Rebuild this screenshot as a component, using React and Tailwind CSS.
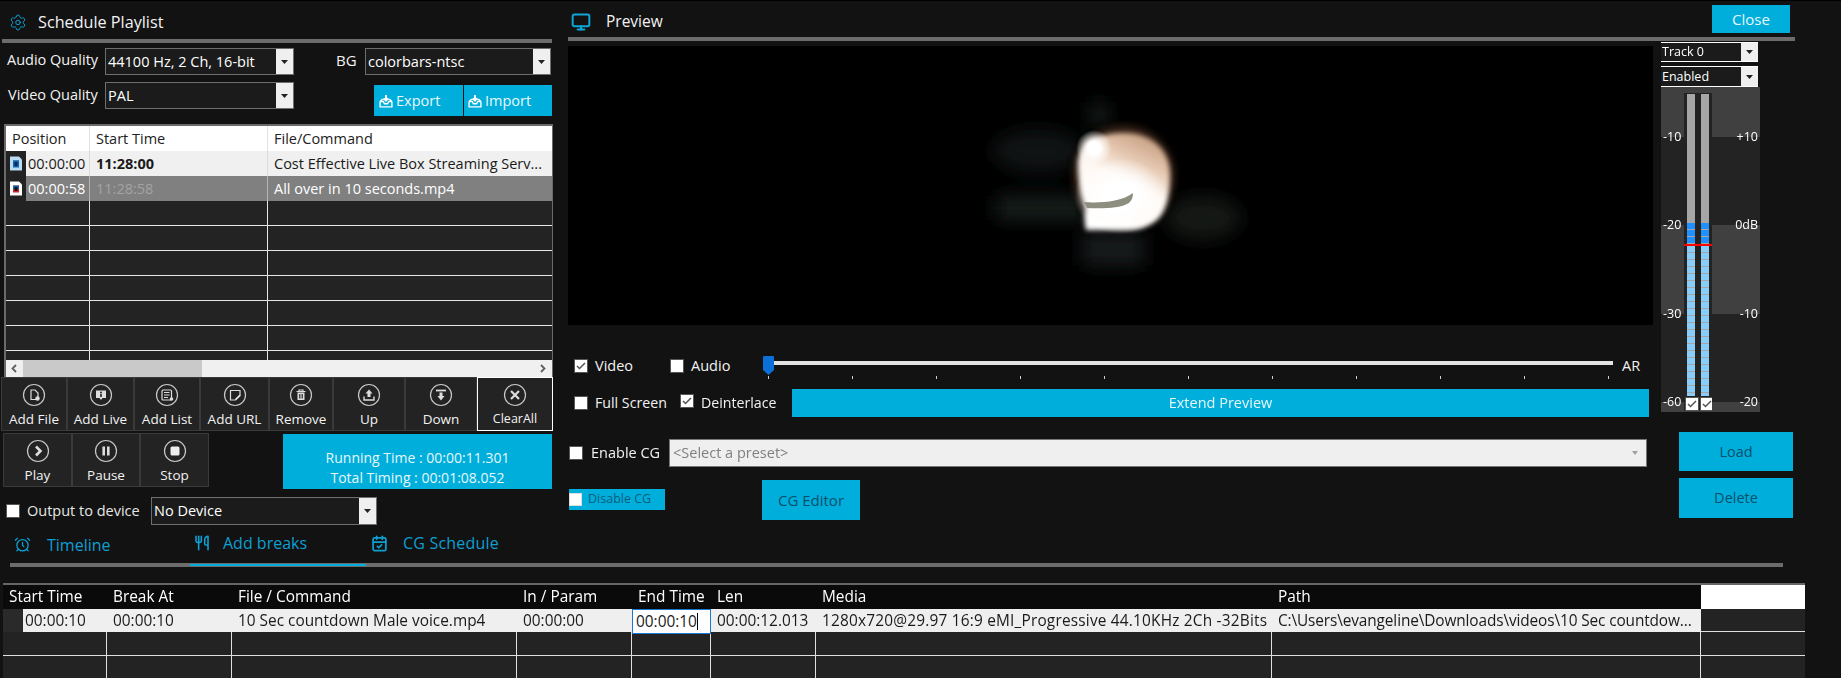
import React from "react";
import { Monitor, AlarmClock, Utensils, CalendarCheck, Settings } from "lucide-react";

const cyan = "bg-[#00aedb]";

function Arrow() {
  return (
    <span className="w-[17px] self-stretch bg-[#efefef] flex items-center justify-center shrink-0">
      <svg width="7" height="4" viewBox="0 0 7 4"><path d="M0 0h7L3.5 4z" fill="#222" /></svg>
    </span>
  );
}

function Select({ value, className }) {
  return (
    <div className={"flex items-center border border-[#6e6e6e] bg-[#1b1b1b] text-[14.5px] leading-[20px] text-white " + className}>
      <span className="flex-1 pl-[2px] whitespace-nowrap">{value}</span>
      <Arrow />
    </div>
  );
}

function Check({ checked, className = "" }) {
  return (
    <span className={"inline-flex items-center justify-center w-[12px] h-[12px] bg-white outline outline-1 outline-[#555] shrink-0 " + className}>
      {checked && (
        <svg width="10" height="10" viewBox="0 0 10 10"><path d="M1 5l2.5 2.5L9 2" stroke="#555" strokeWidth="1.5" fill="none" /></svg>
      )}
    </span>
  );
}

function InboxIcon() {
  return (
    <svg width="14" height="14" viewBox="0 0 13 13" fill="none" stroke="#fff" strokeWidth="1.3" className="shrink-0">
      <path d="M1 7l2-2h1.5M12 7l-2-2H8.5M1 7v5h11V7M1 7h3l1 2h3l1-2h3" />
      <path d="M6.5 1v5M4.5 4l2 2.2 2-2.2" strokeWidth="1.8" />
    </svg>
  );
}

function FileGlyph({ dark }) {
  return (
    <svg width="12" height="15" viewBox="0 0 12 14">
      <path d="M0 0h9l3 3v11H0z" fill={dark ? "#fff" : "#b9dcf2"} />
      <rect x="3" y="4" width="6" height="7" fill={dark ? "#d8232a" : "#1167b1"} />
      <rect x="3" y="4" width="6" height="3.5" fill="#1167b1" />
      <rect x="4.5" y="5.5" width="3" height="4" fill={dark ? "#111" : "#0b2b55"} />
    </svg>
  );
}

const glyphs = {
  file: <><path d="M9 7h4l3 3v6.5H9z" fill="none" /><circle cx="15.5" cy="15.5" r="2.2" fill="#ddd" stroke="none" /></>,
  live: <><path d="M7 7.5h10v7.5h-3.5l-1.5 2-1.5-2H7z" fill="#ddd" stroke="none" /><circle cx="12" cy="9.5" r="1" fill="#222" stroke="none" /><rect x="11.2" y="11" width="1.6" height="3" fill="#222" stroke="none" /></>,
  list: <><rect x="7" y="7" width="9.5" height="10" rx="1" fill="none" /><path d="M9 9.5h5.5M9 12h5.5M9 14.5h4" /><circle cx="16.5" cy="16" r="1.8" fill="#ddd" stroke="none" /></>,
  url: <><path d="M7.5 7.5h9.5v5l-4.5 4.5h-5z" fill="none" /><path d="M12.5 15.5l4-4 1.2 1.2-4 4h-1.2z" fill="#ddd" stroke="none" /></>,
  remove: <><path d="M7.5 8.5h9M10 8.5V7h4v1.5" fill="none" /><path d="M8.5 9.5h7V17h-7z" fill="#ddd" stroke="none" /><path d="M10.5 11v4.5M12 11v4.5M13.5 11v4.5" stroke="#222" strokeWidth="0.8" /></>,
  up: <><path d="M12 6.5l3.5 4h-2v3.5h-3v-3.5h-2z" fill="#ddd" stroke="none" /><path d="M7 13.5v3.5h10v-3.5" fill="none" strokeWidth="1.4" /></>,
  down: <><path d="M7 7.5h10" strokeWidth="1.8" /><path d="M10.5 9.5h3v3.5h2L12 17.5 8.5 13h2z" fill="#ddd" stroke="none" /></>,
  clear: <path d="M8 8l8 8M16 8l-8 8" strokeWidth="2.2" />,
  play: <path d="M10 7.5l4.5 4.5-4.5 4.5" fill="none" strokeWidth="2.6" />,
  pause: <path d="M9.7 7.5v9M14.3 7.5v9" strokeWidth="2.6" />,
  stop: <rect x="7.5" y="7.5" width="9" height="9" rx="1.5" fill="#eee" stroke="none" />,
};

function ToolBtn({ label, icon, className, text = "text-[13.5px]" }) {
  return (
    <div className={"flex flex-col items-center bg-[#232323] border border-[#3a3a3a] pt-[5px] " + className}>
      <svg width="24" height="24" viewBox="0 0 24 24" stroke="#ddd" strokeWidth="1.2">
        <circle cx="12" cy="12" r="10.5" fill="none" stroke="#c8c8c8" />
        {glyphs[icon]}
      </svg>
      <span className={"mt-[3px] leading-[18px] whitespace-nowrap text-[#f2f2f2] " + text}>{label}</span>
    </div>
  );
}

const leftCols = ["w-[84px]", "w-[178px]", "w-[283px]"];

function LeftTable() {
  return (
    <div className="ml-[4px] mt-[8px] w-[549px] border-l-2 border-r border-t-2 border-[#6a6a6a] flex flex-col">
      <div className="flex h-[25px] bg-white text-[#222] text-[14.5px] items-center shrink-0">
        <div className={leftCols[0] + " pl-[6px] pt-[1px] h-full flex items-center border-r border-[#e2e2e2]"}>Position</div>
        <div className={leftCols[1] + " pl-[6px] pt-[1px] h-full flex items-center border-r border-[#e2e2e2]"}>Start Time</div>
        <div className={leftCols[2] + " pl-[6px] pt-[1px] h-full flex items-center"}>File/Command</div>
      </div>
      <div className="h-[209px] overflow-hidden bg-[#232323]">
        <div className="flex h-[25px] bg-[#f0f0f0] text-[#1a1a1a] text-[14.5px] items-center">
          <div className={leftCols[0] + " h-full flex items-center border-r border-[#dadada]"}>
            <span className="w-[20px] h-full bg-[#232323] flex items-center justify-center"><FileGlyph /></span>
            <span className="pl-[2px]">00:00:00</span>
          </div>
          <div className={leftCols[1] + " pl-[6px] font-bold h-full flex items-center border-r border-[#dadada]"}>11:28:00</div>
          <div className={leftCols[2] + " pl-[6px] whitespace-nowrap h-full flex items-center"}>Cost Effective Live Box Streaming Serv...</div>
        </div>
        <div className="flex h-[25px] bg-[#808080] text-white text-[14.5px] items-center">
          <div className={leftCols[0] + " h-full flex items-center border-r border-[#b5b5b5]"}>
            <span className="w-[20px] h-full bg-[#232323] flex items-center justify-center"><FileGlyph dark /></span>
            <span className="pl-[2px]">00:00:58</span>
          </div>
          <div className={leftCols[1] + " pl-[6px] text-[#a3a3a3] h-full flex items-center border-r border-[#b5b5b5]"}>11:28:58</div>
          <div className={leftCols[2] + " pl-[6px] h-full flex items-center"}>All over in 10 seconds.mp4</div>
        </div>
        {[0, 1, 2, 3, 4, 5, 6].map((i) => (
          <div key={i} className="flex h-[25px] border-b border-[#e6e6e6]">
            <div className={leftCols[0] + " border-r border-[#e6e6e6]"} />
            <div className={leftCols[1] + " border-r border-[#e6e6e6]"} />
            <div className={leftCols[2]} />
          </div>
        ))}
      </div>
      <div className="h-[17px] bg-[#f0f0f0] flex items-center justify-between pr-[3px]">
        <div className="flex items-center h-full">
          <svg width="17" height="17" viewBox="0 0 17 17"><path d="M10 5l-3.5 3.5L10 12" stroke="#606060" strokeWidth="1.8" fill="none" /></svg>
          <div className="w-[179px] h-full bg-[#c9c9c9]" />
        </div>
        <svg width="12" height="17" viewBox="0 0 12 17"><path d="M4 5l3.5 3.5L4 12" stroke="#606060" strokeWidth="1.8" fill="none" /></svg>
      </div>
    </div>
  );
}

function LeftColumn() {
  return (
    <div className="w-[556px] shrink-0 flex flex-col">
      <div className="h-[38px] flex items-center pl-[9px] pt-[4px]">
        <span className="w-[18px] h-[18px] flex items-center justify-center">
          <Settings size={21} color="#0ea5d8" strokeWidth={1.3} />
        </span>
        <span className="ml-[11px] text-[16.2px] text-[#f2f2f2] whitespace-nowrap">Schedule Playlist</span>
      </div>
      <div className="ml-[2px] mr-[4px] h-[4px] bg-[#6c6c6c]" />
      <div className="flex mt-[5px]">
        <div className="flex flex-col gap-[7px] w-[365px] shrink-0">
          <div className="flex items-center h-[27px]">
            <span className="w-[105px] pl-[7px] pb-[4px] text-[14.5px] text-[#f2f2f2] whitespace-nowrap">Audio Quality</span>
            <Select value="44100 Hz, 2 Ch, 16-bit" className="w-[189px] h-[27px]" />
            <span className="ml-[42px] pb-[2px] text-[15px] text-[#f2f2f2]">BG</span>
          </div>
          <div className="flex items-center h-[27px]">
            <span className="w-[105px] pl-[8px] pb-[1px] text-[14.5px] text-[#f2f2f2] whitespace-nowrap">Video Quality</span>
            <Select value="PAL" className="w-[189px] h-[27px]" />
          </div>
        </div>
        <div className="flex flex-col">
          <Select value="colorbars-ntsc" className="w-[186px] h-[27px]" />
          <div className="flex ml-[9px] mt-[10px] gap-[1px]">
            <div className={cyan + " w-[89px] h-[31px] flex items-center pl-[5px] gap-[3px] text-[14.5px] text-[#eaf7fb]"}><InboxIcon />Export</div>
            <div className={cyan + " w-[88px] h-[31px] flex items-center pl-[4px] gap-[3px] text-[14.5px] text-[#eaf7fb]"}><InboxIcon />Import</div>
          </div>
        </div>
      </div>
      <LeftTable />
      <div className="flex ml-[1px] h-[54px]">
        <ToolBtn label="Add File" icon="file" className="w-[66px]" />
        <ToolBtn label="Add Live" icon="live" className="w-[67px]" />
        <ToolBtn label="Add List" icon="list" className="w-[66px]" />
        <ToolBtn label="Add URL" icon="url" className="w-[69px]" />
        <ToolBtn label="Remove" icon="remove" className="w-[64px]" />
        <ToolBtn label="Up" icon="up" className="w-[72px]" />
        <ToolBtn label="Down" icon="down" className="w-[72px]" />
        <ToolBtn label="ClearAll" icon="clear" className="w-[76px] !border-white" text="text-[12.5px]" />
      </div>
      <div className="flex mt-[2px] ml-[3px] items-start">
        <ToolBtn label="Play" icon="play" className="w-[69px] h-[54px]" />
        <ToolBtn label="Pause" icon="pause" className="w-[68px] h-[54px]" />
        <ToolBtn label="Stop" icon="stop" className="w-[69px] h-[54px]" />
        <div className={cyan + " ml-[74px] mt-[1px] w-[269px] h-[55px] flex flex-col items-center justify-end pb-[1px] text-[14px] leading-[20px] text-[#e6f6fb]"}>
          <span>Running Time : 00:00:11.301</span>
          <span>Total Timing : 00:01:08.052</span>
        </div>
      </div>
      <div className="flex items-center mt-[8px] h-[28px] pl-[7px]">
        <Check />
        <span className="ml-[8px] w-[124px] text-[14.5px] text-[#e6e6e6] whitespace-nowrap">Output to device</span>
        <Select value="No Device" className="w-[226px] h-[28px]" />
      </div>
      <div className="flex mt-[3px] h-[34px] text-[#0e9fd2] text-[16px]">
        <div className="flex items-center w-[190px] pl-[14px] pb-[1px]">
          <AlarmClock size={17} strokeWidth={1.8} />
          <span className="ml-[16px]">Timeline</span>
        </div>
        <div className="flex items-center w-[176px] pl-[4px] pb-[4px]">
          <Utensils size={16} strokeWidth={2.4} />
          <span className="ml-[13px]">Add breaks</span>
        </div>
        <div className="flex items-center pl-[5px] pb-[4px]">
          <CalendarCheck size={17} strokeWidth={2.4} />
          <span className="ml-[15px] tracking-[0.2px]">CG Schedule</span>
        </div>
      </div>
    </div>
  );
}

function NineGlow() {
  return (
    <svg width="1085" height="279" viewBox="0 0 1085 279" className="block">
      <defs>
        <filter id="b2" x="-30%" y="-30%" width="160%" height="160%"><feGaussianBlur stdDeviation="2.6" /></filter>
        <filter id="b1" x="-30%" y="-30%" width="160%" height="160%"><feGaussianBlur stdDeviation="0.6" /></filter>
        <filter id="b8" x="-40%" y="-60%" width="180%" height="220%"><feGaussianBlur stdDeviation="9" /></filter>
        <linearGradient id="nine" x1="0.75" y1="0" x2="0.3" y2="1">
          <stop offset="0" stopColor="#c39a7c" />
          <stop offset="0.28" stopColor="#e6c9b2" />
          <stop offset="0.5" stopColor="#fff8f2" />
          <stop offset="1" stopColor="#ffffff" />
        </linearGradient>
        <radialGradient id="hot" cx="0.5" cy="0.5" r="0.5">
          <stop offset="0.35" stopColor="#fff" />
          <stop offset="1" stopColor="#fff" stopOpacity="0" />
        </radialGradient>
        <radialGradient id="halo" cx="0.5" cy="0.5" r="0.5">
          <stop offset="0.82" stopColor="#6a4430" stopOpacity="0.55" />
          <stop offset="1" stopColor="#3a2518" stopOpacity="0" />
        </radialGradient>
      </defs>
      <g filter="url(#b8)" fill="#2a302d">
        <ellipse cx="470" cy="105" rx="46" ry="22" opacity="0.38" />
        <rect x="428" y="150" width="90" height="24" opacity="0.6" />
        <ellipse cx="635" cy="172" rx="38" ry="22" opacity="0.45" />
        <rect x="514" y="186" width="62" height="34" opacity="0.55" />
        <rect x="523" y="56" width="16" height="26" opacity="0.6" />
      </g>
      <ellipse cx="556" cy="130" rx="56" ry="56" fill="url(#halo)" filter="url(#b2)" />
      <g filter="url(#b2)">
        <path d="M510 118C510 98 530 87 556 87C585 87 602 105 602 128C602 150 598 165 590 173C582 181 570 184 560 184H518C516 176 516 170 518 162C513 150 510 135 510 118Z" fill="url(#nine)" />
      </g>
      <ellipse cx="526" cy="102" rx="18" ry="18" fill="url(#hot)" />
      <ellipse cx="552" cy="150" rx="46" ry="38" fill="url(#hot)" />
      <path d="M516 156C528 157 552 157 565 147C565 152 563 156 559 158C552 162 535 163 519 162Z" fill="#8d8d80" filter="url(#b1)" />
    </svg>
  );
}

function Meter() {
  const Band = ({ labels, align }) => {
    const bands = [
      ["h-[50px] bg-[#404040]", labels[0]],
      ["h-[88px] bg-[#232323]", labels[1]],
      ["h-[89px] bg-[#404040]", labels[2]],
      ["h-[88px] bg-[#232323]", labels[3]],
      ["h-[10px] bg-[#404040]", null],
    ];
    return (
      <div className="flex flex-col flex-1">
        {bands.map(([c, l], i) => (
          <div key={i} className={"relative " + c}>
            {l && <span className={"absolute z-10 bottom-[-9px] text-[12.5px] leading-[18px] text-white " + align}>{l}</span>}
          </div>
        ))}
      </div>
    );
  };
  const ticks = (n, c) =>
    Array.from({ length: n }).map((_, i) => <div key={i} className={"h-[7px] shrink-0 border-b border-[#a6a6a6] " + c} />);
  const Bar = () => (
    <div className="w-[8px] flex flex-col">
      <div className="h-[129px] bg-[#a6a6a6]" />
      {ticks(3, "bg-[#1e90ff]")}
      <div className="h-[2px]" />
      <div className="h-[150px] overflow-hidden">{ticks(22, "bg-[#87cefa]")}</div>
    </div>
  );
  return (
    <div className="w-[99px] ml-[8px] mt-[1px] flex flex-col">
      <div className="flex items-center h-[20px] w-[97px] border-y border-white bg-[#1b1b1b] text-[12.5px] text-white leading-[16px]">
        <span className="flex-1 pl-[1px]">Track 0</span>
        <Arrow />
      </div>
      <div className="flex items-center h-[21px] w-[97px] mt-[4px] border-y border-white bg-[#1b1b1b] text-[12.5px] text-white leading-[16px]">
        <span className="flex-1 pl-[1px]">Enabled</span>
        <Arrow />
      </div>
      <div className="flex h-[325px]">
        <div className="w-[23px]"><Band align="left-[2px]" labels={["-10", "-20", "-30", "-60"]} /></div>
        <div className="w-[28px] flex flex-col">
          <div className="h-[6px] bg-[#404040]" />
          <div className="relative h-[318px] bg-[#232323] flex flex-col pt-[1px]">
            <div className="flex gap-[6px] pl-[3px]"><Bar /><Bar /></div>
            <div className="flex gap-[3px] pl-[2px] mt-[2px]"><Check checked /><Check checked /></div>
            <div className="absolute left-0 right-0 top-[151px] h-[2px] bg-[#ff0000]" />
          </div>
          <div className="h-[1px] bg-[#404040]" />
        </div>
        <div className="w-[48px]"><Band align="right-[2px]" labels={["+10", "0dB", "-10", "-20"]} /></div>
      </div>
    </div>
  );
}

function Slider() {
  return (
    <div className="flex-1 h-[30px] ml-[33px]">
      <div className="flex items-center">
        <svg width="11" height="20" viewBox="0 0 11 20" className="shrink-0"><path d="M1 0h9a1 1 0 011 1v13l-5.5 5L0 14V1a1 1 0 011-1z" fill="#0a6fd6" /></svg>
        <div className="flex-1 h-[4px] mb-[7px] bg-[#e2e2e2]" />
      </div>
      <div className="flex gap-[83px] pl-[5px]">
        {Array.from({ length: 11 }).map((_, i) => (
          <span key={i} className="w-[1px] h-[3px] bg-[#cfcfcf] shrink-0" />
        ))}
      </div>
    </div>
  );
}

function RightColumn() {
  return (
    <div className="flex-1 flex flex-col min-w-0">
      <div className="h-[36px] flex items-center w-[1239px] pl-[15px]">
        <span className="pt-[5px]"><Monitor size={20} color="#0ea5d8" strokeWidth={2.4} /></span>
        <span className="ml-[15px] pt-[6px] text-[15.5px] text-[#f2f2f2]">Preview</span>
        <div className={cyan + " ml-auto mr-[5px] w-[78px] h-[28px] flex items-center justify-center text-[15px] text-[#e6f6fb]"}>Close</div>
      </div>
      <div className="h-[4px] ml-[12px] w-[1227px] bg-[#6c6c6c]" />
      <div className="flex">
        <div className="w-[1097px] pl-[12px] flex flex-col shrink-0">
          <div className="mt-[5px] h-[279px] bg-black overflow-hidden"><NineGlow /></div>
          <div className="flex mt-[31px] h-[30px] items-start pl-[7px] text-[14.5px] text-[#f2f2f2]">
            <div className="flex items-center h-[20px]"><Check checked /><span className="ml-[8px] leading-[20px]">Video</span></div>
            <div className="flex items-center h-[20px] ml-[38px]"><Check /><span className="ml-[8px] leading-[20px]">Audio</span></div>
            <Slider />
            <span className="ml-[9px] mr-[12px] w-[19px] leading-[20px]">AR</span>
          </div>
          <div className="flex items-center mt-[3px] h-[28px] pl-[7px] pr-[4px] text-[14.2px] text-[#f2f2f2]">
            <Check /><span className="ml-[8px] whitespace-nowrap">Full Screen</span>
            <Check checked className="ml-[14px] -mt-[4px]" /><span className="ml-[8px] whitespace-nowrap">Deinterlace</span>
            <div className={cyan + " ml-auto w-[857px] h-[28px] flex items-center justify-center text-[#e6f6fb] text-[14.5px]"}>Extend Preview</div>
          </div>
        </div>
        <Meter />
      </div>
      <div className="flex mt-[15px]">
        <div className="w-[1123px] shrink-0 pl-[13px] flex flex-col">
          <div className="flex items-center h-[28px] mt-[7px]">
            <Check className="ml-[1px]" />
            <span className="ml-[9px] w-[78px] text-[14.5px] text-[#f2f2f2] whitespace-nowrap">Enable CG</span>
            <div className="w-[978px] h-[28px] bg-[#efefef] border border-[#777] flex items-center justify-between pl-[3px] pr-[8px] text-[14.5px] text-[#808080]">
              <span>&lt;Select a preset&gt;</span>
              <svg width="6" height="4" viewBox="0 0 6 4"><path d="M0 0h6L3 4z" fill="#a0a0a0" /></svg>
            </div>
          </div>
          <div className="flex items-start mt-[13px]">
            <div className={cyan + " w-[96px] h-[21px] mt-[9px] flex items-center text-[12.5px] text-[#0b5d7c]"}>
              <span className="w-[13px] h-[13px] bg-white border border-[#ddd] shrink-0" />
              <span className="ml-[6px] whitespace-nowrap">Disable CG</span>
            </div>
            <div className={cyan + " ml-[97px] w-[98px] h-[40px] flex items-center justify-center text-[15px] text-[#084f6c]"}>CG Editor</div>
          </div>
        </div>
        <div className="flex flex-col gap-[7px]">
          <div className={cyan + " w-[114px] h-[39px] flex items-center justify-center text-[14.5px] text-[#084f6c]"}>Load</div>
          <div className={cyan + " w-[114px] h-[40px] flex items-center justify-center text-[14.5px] text-[#084f6c]"}>Delete</div>
        </div>
      </div>
    </div>
  );
}

const bc = ["w-[104px]", "w-[125px]", "w-[285px]", "w-[115px]", "w-[79px]", "w-[105px]", "w-[456px]", "w-[429px]", "w-[104px]"];
const heads = ["Start Time", "Break At", "File / Command", "In / Param", "End Time", "Len", "Media", "Path"];

function BottomTable() {
  const cells = ["00:00:10", "00:00:10", "10 Sec countdown Male voice.mp4", "00:00:00", "00:00:10", "00:00:12.013", "1280x720@29.97 16:9 eMI_Progressive 44.10KHz 2Ch -32Bits", "C:\\Users\\evangeline\\Downloads\\videos\\10 Sec countdow..."];
  const extra = { 5: " tracking-[0.2px]", 6: " tracking-[-0.12px]" };
  return (
    <div className="ml-[3px] mt-[16px] flex-1 flex flex-col overflow-hidden border-t-2 border-[#666] w-[1802px] text-[15.4px]">
      <div className="flex h-[24px] shrink-0">
        {heads.map((h, i) => (
          <div key={h} className={bc[i] + " bg-[#0a0a0a] text-white pl-[6px] flex items-center whitespace-nowrap"}>{h}</div>
        ))}
        <div className={bc[8] + " bg-white"} />
      </div>
      <div className="flex h-[23px] shrink-0 items-stretch">
        <div className={bc[0] + " flex bg-[#efefef] text-[#1a1a1a]"}>
          <span className="w-[20px] bg-[#2a2a2a]" />
          <span className="pl-[2px] flex items-center">{cells[0]}</span>
        </div>
        {cells.slice(1).map((c, i) =>
          i === 3 ? (
            <div key={i} className={bc[4] + " relative z-10 h-[25px] bg-white border-[1.5px] border-[#1a78d0] text-[#1a1a1a] flex items-center pl-[3px] whitespace-nowrap"}>
              {c}<span className="w-[1px] h-[17px] bg-black" />
            </div>
          ) : (
            <div key={i} className={bc[i + 1] + " bg-[#efefef] text-[#1a1a1a] pl-[6px] flex items-center whitespace-nowrap" + (extra[i] || "")}>{c}</div>
          )
        )}
        <div className={bc[8] + " bg-[#232323] border-b border-[#e0e0e0]"} />
      </div>
      {[0, 1].map((r) => (
        <div key={r} className="flex h-[24px] shrink-0 border-b border-[#e0e0e0] bg-[#232323]">
          {bc.map((c, i) => (
            <div key={i} className={c + (i < 8 ? " border-r border-[#e0e0e0]" : "")} />
          ))}
        </div>
      ))}
    </div>
  );
}

export default function App() {
  return (
    <div className="w-[1841px] h-[678px] bg-[#121212] overflow-hidden flex flex-col border-t border-black font-['Open_Sans',sans-serif]">
      <div className="flex h-[562px] shrink-0">
        <LeftColumn />
        <RightColumn />
      </div>
      <div className="ml-[10px] w-[1773px] h-[4px] bg-[#6c6c6c] flex items-center shrink-0">
        <div className="ml-[180px] w-[176px] h-[2px] bg-[#00aedb]" />
      </div>
      <BottomTable />
    </div>
  );
}
